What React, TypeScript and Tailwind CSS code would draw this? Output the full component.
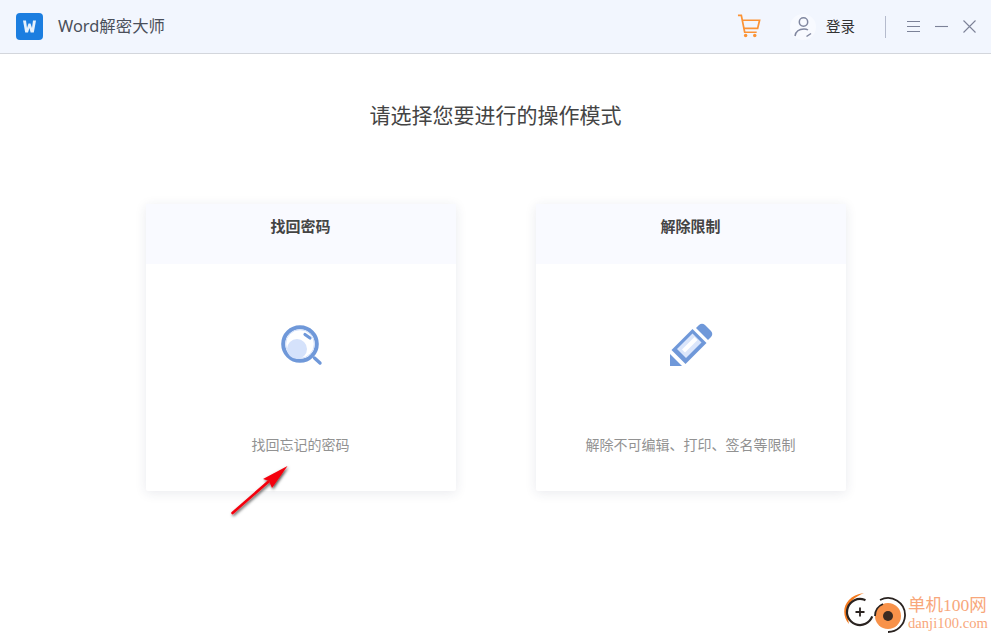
import React from "react";

const font = { fontFamily: '"Noto Sans", "Noto Sans CJK SC", sans-serif' };

const SearchIcon = () => (
  <svg width="46" height="46" viewBox="0 0 46 46" fill="none">
    <circle cx="22" cy="22" r="16.8" fill="#fff" stroke="#6f98d9" strokeWidth="4" />
    <circle cx="22" cy="22" r="14.3" stroke="#d5e2fb" strokeWidth="1" />
    <circle cx="19" cy="27" r="10" fill="#d5e2fb" />
    <path d="M27 12.5 L32 16" stroke="#6f98d9" strokeWidth="3.2" strokeLinecap="round" />
    <path d="M36.5 36 L42 41" stroke="#6f98d9" strokeWidth="3.4" strokeLinecap="round" />
  </svg>
);

const PenIcon = () => (
  <svg width="46" height="46" viewBox="0 0 46 46" fill="none">
    <path d="M2 44 L2 32 L14 44 Z" fill="#6f98d9" />
    <path d="M4 29 L25 8 L39 22 L18 43 Z" transform="translate(-0.5 -1)" fill="#6f98d9" />
    <path d="M9.5 28 L25 12.5 L34 21.5 L18.5 37 Z" transform="translate(-0.5 -1)" fill="#dbe6fb" />
    <path d="M14.5 28.5 L27 16 L30 19 L17.5 31.5 Z" transform="translate(-0.5 -1)" fill="#fff" />
    <path d="M28 6 L31 3 Q34 0.5 37 3 L43 9 Q45.5 12 43 15 L40 18 Z" fill="#6f98d9" />
  </svg>
);

const Card = ({ title, desc, icon }: { title: string; desc: string; icon: React.ReactNode }) => (
  <div className="w-[310px] h-[287px] bg-white rounded-[2px] shadow-[0_2px_12px_rgba(40,50,90,0.1)] flex flex-col">
    <div className="h-[60px] bg-[#f9faff] flex justify-center pt-[10px] text-[15px] leading-[24px] font-bold text-[#444]">
      {title}
    </div>
    <div className="pt-[58px] flex justify-center">{icon}</div>
    <div className="mt-[67px] text-center text-[14px] leading-[20px] text-[#929292]">{desc}</div>
  </div>
);

export default function App() {
  return (
    <div className="relative w-[991px] h-[634px] bg-white overflow-hidden" style={font}>
      <header className="h-[54px] bg-[#f2f6fe] border-b border-[#d3d6dc] flex items-center pl-4 pr-[15px]">
        <svg width="27" height="27" viewBox="0 0 27 27">
          <rect width="27" height="27" rx="4" fill="#1c7ee0" />
          <path d="M7 7.5 h3 l1 7.5 l1.5 -4.5 h2 l1.5 4.5 l1 -7.5 h3 l-2.2 12 h-3.2 L13.5 15 L12 19.5 H9.2 Z" fill="#e6f1fc" />
        </svg>
        <div className="ml-[15px] text-[16.4px] text-[#4a4f5a]">Word解密大师</div>
        <div className="ml-auto flex items-center">
          <svg className="mb-[2px]" width="24" height="24" viewBox="0 0 24 25" fill="none" stroke="#fb9336" strokeWidth="1.8">
            <path d="M0.5 1.5 H4 L7.5 19 H20" />
            <path d="M5 6.5 H23 L21 15 H6.6" />
            <circle cx="8.5" cy="22.5" r="1.8" fill="#fb9336" stroke="none" />
            <circle cx="18" cy="22.5" r="1.8" fill="#fb9336" stroke="none" />
          </svg>
          <div className="ml-[29px] w-[26px] h-[26px] rounded-full bg-[#f8faff] flex items-center justify-center">
            <svg width="20" height="22" viewBox="0 0 20 22" fill="none" stroke="#8087a0" strokeWidth="1.5">
              <circle cx="10.5" cy="6" r="4.2" />
              <path d="M2 20 C3 14.5 7 13 11 13 Q13.5 13 15 14" />
              <path d="M13.5 20.5 L18 17.5" />
            </svg>
          </div>
          <div className="ml-[10px] text-[14.5px] text-[#333]">登录</div>
          <div className="ml-[30px] w-px h-[22px] bg-[#b5bbcd]" />
          <svg className="ml-[21px]" width="13" height="13" viewBox="0 0 13 13" stroke="#7c8298" strokeWidth="1.1">
            <path d="M0 1.5 H13 M0 6.5 H13 M0 11.5 H13" />
          </svg>
          <svg className="ml-[15px]" width="13" height="13" viewBox="0 0 13 13" stroke="#7c8298" strokeWidth="1.1">
            <path d="M0 6.5 H13" />
          </svg>
          <svg className="ml-[15px]" width="13" height="13" viewBox="0 0 13 13" stroke="#7c8298" strokeWidth="1.1">
            <path d="M0.5 0.5 L12.5 12.5 M12.5 0.5 L0.5 12.5" />
          </svg>
        </div>
      </header>

      <h1 className="mt-[45px] text-center text-[21px] leading-[32px] text-[#444]">请选择您要进行的操作模式</h1>

      <div className="mt-[73px] flex justify-center gap-[80px]">
        <Card title="找回密码" desc="找回忘记的密码" icon={<SearchIcon />} />
        <Card title="解除限制" desc="解除不可编辑、打印、签名等限制" icon={<PenIcon />} />
      </div>

      {/* red annotation arrow */}
      <svg className="absolute left-[226px] top-[460px]" width="70" height="60" viewBox="0 0 70 60">
        <defs>
          <filter id="sh" x="-30%" y="-30%" width="160%" height="160%">
            <feDropShadow dx="1" dy="1.5" stdDeviation="1.5" floodColor="#000" floodOpacity="0.7" />
          </filter>
        </defs>
        <g filter="url(#sh)">
          <path d="M6.5 53 L42 22" stroke="#f4000c" strokeWidth="2.6" strokeLinecap="round" />
          <path d="M61.5 6 L46 28 L43 21 L37 19 Z" fill="#f4000c" />
        </g>
      </svg>

      {/* watermark */}
      <div className="absolute left-[842px] top-[590px] flex items-start">
        <svg width="64" height="44" viewBox="0 0 64 44" fill="none">
          <path d="M7 34 C-2 24 1 6 22 3 C13 7 6 12 5.5 21 C5.5 26 6 30 7 34 Z" fill="#f47b20" />
          <circle cx="18" cy="22" r="13" fill="#fff" stroke="#2a2320" strokeWidth="2.2" strokeDasharray="62 20" transform="rotate(20 18 22)" />
          <path d="M18 17.5 V26.5 M13.5 22 H22.5" stroke="#2a2320" strokeWidth="1.8" />
          <circle cx="46" cy="26" r="13" fill="#f8924a" />
          <path d="M38 10 A17 17 0 0 1 63 26 A17 17 0 0 1 46 42" stroke="#2a2320" strokeWidth="1.8" />
          <path d="M33 26 A13 13 0 0 1 41 14" stroke="#2a2320" strokeWidth="1.8" />
          <circle cx="46" cy="26" r="5" fill="#3a2a22" />
        </svg>
        <div className="ml-[2px] mt-[5px] flex flex-col whitespace-nowrap" style={{ fontFamily: '"Liberation Serif", "Noto Sans CJK SC", serif' }}>
          <span className="text-[17.5px] leading-[20px] text-[#f8a77b]">单机100网</span>
          <span className="text-[14.6px] leading-[16px] text-[#f8a77b]">danji100.com</span>
        </div>
      </div>
    </div>
  );
}
